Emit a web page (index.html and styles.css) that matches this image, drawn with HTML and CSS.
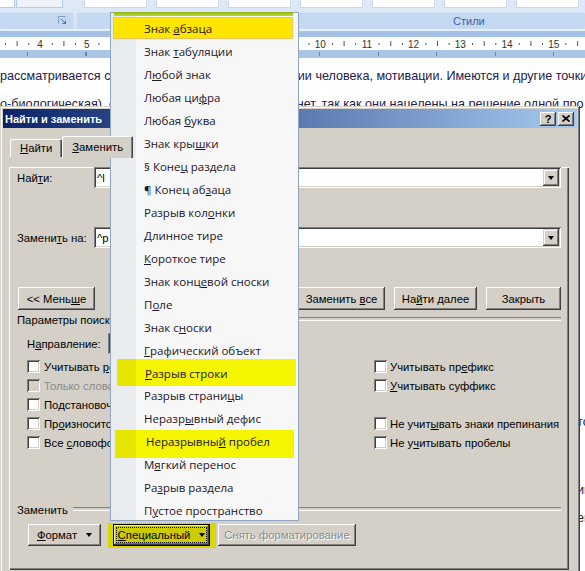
FILE: index.html
```html
<!DOCTYPE html>
<html lang="ru">
<head>
<meta charset="utf-8">
<title>Найти и заменить</title>
<link rel="stylesheet" href="styles.css">
</head>
<body>
<div class="screen">
  <header class="ribbon">
    <div class="gallery">
      <span class="gbox gbox-a"></span>
      <span class="gbox gbox-b"></span>
      <span class="gbox gbox-w gbox-first"></span>
      <span class="gbox gbox-w"></span>
      <span class="gbox gbox-w"></span>
      <span class="gbox gbox-w"></span>
      <span class="gbox gbox-w"></span>
      <span class="gbox gbox-w"></span>
      <span class="gbox gbox-w"></span>
    </div>
    <div class="bands">
      <div class="band band-left">
        <svg class="launcher" width="9" height="9" viewBox="0 0 9 9"><path d="M0.5 7.5V0.5H7.5" fill="none" stroke="#7f9cc6"/><path d="M3 3L7.5 7.5M4.5 7.5H7.5V4.5" fill="none" stroke="#4f6f9f"/></svg>
      </div>
      <div class="band band-styles">Стили</div>
    </div>
  </header>
  <div class="ribbon-edge"></div>
  <div class="ruler-top"></div>
  <svg class="ruler" width="585" height="13" viewBox="0 0 585 13">
    <g fill="#555">
      <rect x="5" y="6" width="1" height="2"/><rect x="16.6" y="4" width="1" height="5"/><rect x="28.3" y="6" width="1" height="2"/>
      <rect x="51.7" y="6" width="1" height="2"/><rect x="63.4" y="4" width="1" height="5"/><rect x="75" y="6" width="1" height="2"/>
      <rect x="98.4" y="6" width="1" height="2"/><rect x="110.1" y="4" width="1" height="5"/><rect x="121.7" y="6" width="1" height="2"/>
      <rect x="145.1" y="6" width="1" height="2"/><rect x="156.8" y="4" width="1" height="5"/><rect x="168.4" y="6" width="1" height="2"/>
      <rect x="191.8" y="6" width="1" height="2"/><rect x="203.5" y="4" width="1" height="5"/><rect x="215.1" y="6" width="1" height="2"/>
      <rect x="238.5" y="6" width="1" height="2"/><rect x="250.2" y="4" width="1" height="5"/><rect x="261.8" y="6" width="1" height="2"/>
      <rect x="285.2" y="6" width="1" height="2"/><rect x="296.9" y="4" width="1" height="5"/><rect x="308.5" y="6" width="1" height="2"/>
      <rect x="331.9" y="6" width="1" height="2"/><rect x="343.6" y="4" width="1" height="5"/><rect x="355.2" y="6" width="1" height="2"/>
      <rect x="378.6" y="6" width="1" height="2"/><rect x="390.3" y="4" width="1" height="5"/><rect x="401.9" y="6" width="1" height="2"/>
      <rect x="425.3" y="6" width="1" height="2"/><rect x="437" y="4" width="1" height="5"/><rect x="448.6" y="6" width="1" height="2"/>
      <rect x="472" y="6" width="1" height="2"/><rect x="483.7" y="4" width="1" height="5"/><rect x="495.3" y="6" width="1" height="2"/>
      <rect x="518.7" y="6" width="1" height="2"/><rect x="530.4" y="4" width="1" height="5"/><rect x="542" y="6" width="1" height="2"/>
      <rect x="565.4" y="6" width="1" height="2"/><rect x="577.1" y="4" width="1" height="5"/>
    </g>
    <g class="ruler-num" text-anchor="middle">
      <text x="40" y="10.5">4</text><text x="86.7" y="10.5">5</text><text x="133.4" y="10.5">6</text>
      <text x="180.1" y="10.5">7</text><text x="226.8" y="10.5">8</text><text x="273.5" y="10.5">9</text>
      <text x="320.2" y="10.5">10</text><text x="366.9" y="10.5">11</text><text x="413.6" y="10.5">12</text>
      <text x="460.3" y="10.5">13</text><text x="507" y="10.5">14</text><text x="553.7" y="10.5">15</text>
    </g>
  </svg>
  <div class="ruler-bottom"><div class="ruler-ticks"></div></div>
  <main class="doc">
    <p class="line">рассматривается с точки зрения логики и психологии человека, мотивации. Имеются и другие точки</p>
    <p class="line">о-биологическая), однако и единого мнения здесь нет, так как они нацелены на решение одной про</p>
    <p class="line edge edge-1">точки</p>
    <p class="line edge edge-2">имеется</p>
    <p class="line edge">его</p>
  </main>

  <section class="dialog">
    <div class="titlebar">
      <span class="title">Найти и заменить</span>
      <span class="tbtn tbtn-help">?</span>
      <span class="tbtn"><svg width="8" height="7" viewBox="0 0 8 7"><path d="M0.5 0.5L7.5 6.5M7.5 0.5L0.5 6.5" stroke="#000" stroke-width="1.7"/></svg></span>
    </div>
    <div class="tabs">
      <span class="tab"><span><u>Н</u>айти</span></span>
      <span class="tab tab-sel"><span><u>З</u>аменить</span></span>
    </div>
    <div class="panel">
      <div class="field-row field-find">
        <span class="field-label">Най<u>т</u>и:</span>
        <span class="combo"><span class="combo-text">^l</span><span class="drop"><i class="arrow"></i></span></span>
      </div>
      <div class="field-row field-replace">
        <span class="field-label">Замени<u>т</u>ь на:</span>
        <span class="combo"><span class="combo-text">^p</span><span class="drop"><i class="arrow"></i></span></span>
      </div>
      <div class="btn-row">
        <span class="btn btn-less"><span>&lt;&lt; Мень<u>ш</u>е</span></span>
        <span class="btn btn-all"><span>Заменить <u>в</u>се</span></span>
        <span class="btn btn-next"><span>На<u>й</u>ти далее</span></span>
        <span class="btn btn-close"><span>Закрыть</span></span>
      </div>
      <div class="group-label group-options"><span>Параметры поиска</span></div>
      <div class="dir-row">
        <span class="dir-label">Н<u>а</u>правление:</span>
        <span class="dir-combo"></span>
      </div>
      <div class="checks">
        <span class="cb"><i class="box"></i><span>Учитывать <u>р</u>егистр</span></span>
        <span class="cb cb-r"><i class="box"></i><span>Учитывать пр<u>е</u>фикс</span></span>
        <span class="cb cb-off"><i class="box"></i><span>Только слово целиком</span></span>
        <span class="cb cb-r"><i class="box"></i><span><u>У</u>читывать суффикс</span></span>
        <span class="cb"><i class="box"></i><span>Подстановочные знаки</span></span>
        <span class="cb cb-r"></span>
        <span class="cb"><i class="box"></i><span>Пр<u>о</u>износится как</span></span>
        <span class="cb cb-r"><i class="box"></i><span>Не учит<u>ы</u>вать знаки препинания</span></span>
        <span class="cb"><i class="box"></i><span>Все <u>с</u>ловоформы</span></span>
        <span class="cb cb-r"><i class="box"></i><span>Не у<u>ч</u>итывать пробелы</span></span>
      </div>
      <div class="group-label group-replace"><span>Заменить</span></div>
      <div class="bottom-row">
        <span class="btn btn-format"><span><u>Ф</u>ормат</span><i class="arrow"></i></span>
        <span class="special-mark"><span class="btn btn-special"><span class="focus"><span><u>С</u>пециальный</span><i class="arrow"></i></span></span></span>
        <span class="btn btn-clear"><span>Снять форматирование</span></span>
      </div>
    </div>
  </section>

  <nav class="menu">
    <div class="mi mi-first"><span>Знак <u>а</u>бзаца</span></div>
    <div class="mi"><span>Знак <u>т</u>абуляции</span></div>
    <div class="mi"><span>Л<u>ю</u>бой знак</span></div>
    <div class="mi"><span>Любая ци<u>ф</u>ра</span></div>
    <div class="mi"><span>Любая <u>б</u>уква</span></div>
    <div class="mi"><span>Знак кры<u>ш</u>ки</span></div>
    <div class="mi"><span>§ Коне<u>ц</u> раздела</span></div>
    <div class="mi"><span>¶ Конец аб<u>з</u>аца</span></div>
    <div class="mi"><span>Разрыв кол<u>о</u>нки</span></div>
    <div class="mi"><span><u>Д</u>линное тире</span></div>
    <div class="mi"><span><u>К</u>ороткое тире</span></div>
    <div class="mi"><span>Знак конц<u>е</u>вой сноски</span></div>
    <div class="mi"><span>П<u>о</u>ле</span></div>
    <div class="mi"><span>Знак с<u>н</u>оски</span></div>
    <div class="mi"><span><u>Г</u>рафический объект</span></div>
    <div class="mi mi-mark mi-mark-a"><span><u>Р</u>азрыв строки</span></div>
    <div class="mi"><span>Разрыв страни<u>ц</u>ы</span></div>
    <div class="mi"><span>Неразр<u>ы</u>вный дефис</span></div>
    <div class="mi mi-mark mi-mark-b"><span>Неразрывны<u>й</u> пробел</span></div>
    <div class="mi"><span>М<u>я</u>гкий перенос</span></div>
    <div class="mi"><span>Ра<u>з</u>рыв раздела</span></div>
    <div class="mi"><span>П<u>у</u>стое пространство</span></div>
  </nav>
</div>
</body>
</html>
```

FILE: styles.css
```css
* { box-sizing: border-box; }
html, body { margin: 0; padding: 0; }
body {
  width: 585px; height: 571px; overflow: hidden; background: #fff;
  font-family: "Liberation Sans", Arial, sans-serif;
}
u { text-decoration: underline; text-underline-offset: 1px; }
.screen { position: relative; width: 585px; height: 571px; overflow: hidden; }

/* ribbon */
.ribbon { height: 29px; background: linear-gradient(#dfeaf7, #d3e2f4); }
.gallery { display: flex; height: 8px; }
.gbox { display: block; height: 8px; flex: none; }
.gbox-a { width: 15px; background: #fff; border-right: 1px solid #b8cbe3; border-bottom: 1px solid #b8cbe3; }
.gbox-b { width: 47px; margin-left: 1px; background: #eef3fa; border: 1px solid #b8cbe3; border-top: none; }
.gbox-w { width: 63px; margin-left: 9px; background: #fff; border: 1px solid #c8d7eb; border-top: none; }
.gbox-first { margin-left: 21px; }
.bands { display: flex; height: 16px; margin-top: 5px; }
.band { background: #c4d8f1; border-radius: 0 0 3px 3px; }
.band-left { width: 73px; display: flex; justify-content: flex-end; padding: 3px 6px 0 0; }
.launcher { display: block; }
.band-styles { flex: 1; margin-left: 4px; padding-left: 376px; color: #3b62a6; font-size: 11px; line-height: 16px; }
.ribbon-edge { height: 2px; background: #e3f1fd; }
.ruler-top { height: 6px; background: #a5c0e3; }
.ruler { display: block; background: #fff; }
.ruler-num { font: 10px "Liberation Sans", Arial, sans-serif; fill: #333; }
.ruler-bottom { height: 8px; background: #a9c4e5; padding: 2px 0 0 27px; }
.ruler-ticks { height: 4px; background: repeating-linear-gradient(to right, #6b86b2 0 1px, transparent 1px 58.5px); }

/* document */
.doc { padding-top: 4px; font-size: 12.6px; line-height: 28px; color: #22204a; white-space: nowrap; overflow: hidden; }
.line { margin: 0; }
.edge { padding-left: 577px; }
.edge-1 { margin-top: 290px; }
.edge-2 { margin-top: 40px; }

/* dialog */
.dialog {
  position: absolute; left: 0; top: 106px; width: 580px; height: 475px;
  background: #d4d0c8; padding: 3px;
  box-shadow: inset -1px -1px #404040, inset 1px 1px #d4d0c8, inset -2px -2px #808080, inset 2px 2px #fff;
  font: 11.3px "Liberation Sans", Arial, sans-serif; color: #000;
}
.titlebar {
  height: 19px; display: flex; align-items: center; padding: 0 3px 0 2px;
  background: linear-gradient(to right, #0a246a, #a6caf0);
}
.title { flex: 1; color: #fff; font-weight: bold; font-size: 11px; }
.tbtn {
  width: 16px; height: 14px; display: flex; align-items: center; justify-content: center;
  background: #d4d0c8; font-weight: bold; font-size: 11px;
  box-shadow: inset -1px -1px #404040, inset 1px 1px #fff, inset -2px -2px #808080;
}
.tbtn + .tbtn { margin-left: 2px; }

.tabs { display: flex; align-items: flex-end; height: 21px; margin: 8px 0 0 7px; }
.tab {
  height: 18px; padding: 0 10px 0 10px; display: flex; align-items: center;
  background: #d4d0c8; border-radius: 2px 2px 0 0;
  box-shadow: inset 1px 1px #fff, inset -1px 0 #404040, inset -2px 0 #808080;
}
.tab-sel { height: 22px; margin-bottom: -1px; padding: 0 10px 1px 10px; position: relative; z-index: 1; }

.panel {
  margin-left: 6px; width: 560px; height: 403px; padding: 0 8px;
  box-shadow: inset 1px 1px #fff, inset -1px -1px #404040, inset -2px -2px #808080;
}
.field-row { display: flex; align-items: center; height: 21px; margin-top: 39px; }
.field-find { margin-top: 10px; }
.field-label { width: 77px; }
.combo {
  width: 467px; height: 21px; background: #fff; padding: 2px; display: flex; align-items: center;
  box-shadow: inset 1px 1px #808080, inset -1px -1px #fff, inset 2px 2px #404040, inset -2px -2px #d4d0c8;
}
.combo-text { flex: 1; padding-left: 1px; }
.drop {
  width: 16px; height: 17px; background: #d4d0c8; display: flex; align-items: center; justify-content: center;
  box-shadow: inset -1px -1px #404040, inset 1px 1px #d4d0c8, inset -2px -2px #808080, inset 2px 2px #fff;
}
.arrow { display: block; width: 0; height: 0; border-left: 3.5px solid transparent; border-right: 3.5px solid transparent; border-top: 4px solid #000; }

.btn {
  display: flex; align-items: center; justify-content: center; background: #d4d0c8; white-space: nowrap;
  box-shadow: inset -1px -1px #404040, inset 1px 1px #fff, inset -2px -2px #808080;
}
.btn-row { display: flex; height: 23px; margin-top: 39px; }
.btn-row .btn { height: 23px; }
.btn-less { width: 77px; margin-left: 1px; }
.btn-all { width: 87px; margin-left: auto; }
.btn-next { width: 83px; margin-left: 9px; }
.btn-close { width: 75px; margin-left: 9px; }

.group-label { display: flex; align-items: center; height: 14px; }
.group-label::after {
  content: ""; flex: 1; height: 2px; margin: -2px 0 0 5px;
  border-top: 1px solid #808080; border-bottom: 1px solid #fff;
}
.group-options { margin-top: 3px; }
.group-replace { margin-top: 51px; }

.dir-row { display: flex; align-items: center; height: 21px; margin-top: 6px; padding-left: 10px; }
.dir-label { width: 81px; }
.dir-combo {
  width: 150px; height: 21px; background: #fff;
  box-shadow: inset 1px 1px #808080, inset -1px -1px #fff, inset 2px 2px #404040, inset -2px -2px #d4d0c8;
}

.checks { display: grid; grid-template-columns: 347px 1fr; grid-auto-rows: 19px; margin-top: 3px; padding-left: 10px; }
.cb { display: flex; align-items: center; white-space: nowrap; }
.box {
  display: block; width: 13px; height: 13px; margin-right: 4px; background: #fff; flex: none;
  box-shadow: inset 1px 1px #808080, inset -1px -1px #fff, inset 2px 2px #404040, inset -2px -2px #d4d0c8;
}
.cb-r .box { margin-right: 3px; }
.cb-off { color: #8a8a8a; }
.cb-off .box { background: #d4d0c8; }

.bottom-row { display: flex; align-items: center; height: 22px; margin-top: 7px; padding-left: 11px; }
.bottom-row .btn { height: 22px; }
.btn-format { width: 73px; }
.btn-format .arrow, .btn-special .arrow { margin-left: 9px; }
.special-mark { width: 108px; height: 25px; margin-left: 7px; background: #d8d800; display: flex; align-items: center; padding-left: 5px; }
.btn-special {
  width: 97px; background: #cccc00;
  box-shadow: inset 0 0 0 1px #000, inset -2px -2px #404040, inset 2px 2px #f0f080, inset -3px -3px #808000;
}
.focus { display: flex; align-items: center; justify-content: center; width: 89px; height: 14px; outline: 1px dotted #000; }
.btn-clear { width: 138px; margin-left: 2px; color: #8a8a8a; text-shadow: 1px 1px 0 #fff; }

/* popup menu */
.menu {
  position: absolute; left: 110px; top: 12px; width: 189px; height: 509px;
  border: 1px solid #8ea5c6; padding-top: 4.5px;
  background: linear-gradient(to right, #e8ecef 25px, #f7f7f7 25px);
  font: 11.5px "Open Sans", "DejaVu Sans", sans-serif; color: #1c1628;
}
.menu::before {
  content: ""; position: absolute; left: 3px; right: 5px; top: -1px; height: 4px;
  background: linear-gradient(#89b018, #c0dc2a);
}
.mi { position: relative; height: 22.95px; display: flex; align-items: center; padding-left: 33px; white-space: nowrap; }
.mi > span { position: relative; z-index: 1; }
.mi-first::before {
  content: ""; position: absolute; left: 2px; right: 5px; top: -0.5px; bottom: 1.5px;
  background: #ffe500; border: 1px solid #f0c25a;
}
.mi-mark::before { content: ""; position: absolute; }
.mi-mark-a::before { left: 6px; right: 2px; top: -2.75px; bottom: -1.3px; background: linear-gradient(to right, #e6e600 19px, #f5f500 19px); }
.mi-mark-b::before { left: 4px; right: 4px; top: 0; bottom: -4.5px; background: linear-gradient(to right, #e6e600 21px, #f5f500 21px); }
.mi-mark-a > span { left: 1px; }
.mi-mark-b > span { left: 2px; }
```
